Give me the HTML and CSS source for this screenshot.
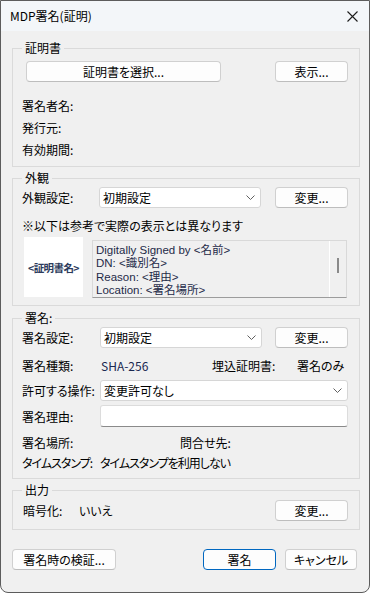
FILE: index.html
```html
<!DOCTYPE html>
<html lang="ja">
<head>
    <meta charset="UTF-8">
    <meta name="viewport" content="width=device-width, initial-scale=1.0">
    <title>MDP署名(証明)</title>
    <link rel="stylesheet" href="styles.css">
</head>
<body>
    <div class="dialog">
        <div class="titlebar">
            <span class="title">MDP署名(証明)</span>
            <svg class="close" width="11" height="11" viewBox="0 0 11 11">
                <path d="M0.5 0.5 L10.5 10.5 M10.5 0.5 L0.5 10.5" stroke="#1c1c1c" stroke-width="1.1" fill="none"/>
            </svg>
        </div>

        <div class="content">
            <!-- 証明書 -->
            <fieldset class="group group-cert">
                <legend>証明書</legend>
                <div class="row">
                    <button class="btn btn-select">証明書を選択...</button>
                    <button class="btn btn-side">表示...</button>
                </div>
                <div class="info-list">
                    <div class="info">署名者名:</div>
                    <div class="info">発行元:</div>
                    <div class="info">有効期間:</div>
                </div>
            </fieldset>

            <!-- 外観 -->
            <fieldset class="group group-look">
                <legend>外観</legend>
                <div class="row">
                    <span class="label">外観設定:</span>
                    <div class="select select-short">
                        <span>初期設定</span>
                        <svg width="9" height="5" viewBox="0 0 9 5"><path d="M0.5 0.5 L4.5 4.5 L8.5 0.5" stroke="#606060" fill="none"/></svg>
                    </div>
                    <button class="btn btn-side">変更...</button>
                </div>
                <div class="note">※以下は参考で実際の表示とは異なります</div>
                <div class="preview">
                    <div class="preview-image">&lt;証明書名&gt;</div>
                    <div class="preview-text">
                        <div class="lines">
                            <div>Digitally Signed by &lt;名前&gt;</div>
                            <div>DN: &lt;識別名&gt;</div>
                            <div>Reason: &lt;理由&gt;</div>
                            <div>Location: &lt;署名場所&gt;</div>
                        </div>
                        <div class="scroll"><div class="thumb"></div></div>
                    </div>
                </div>
            </fieldset>

            <!-- 署名 -->
            <fieldset class="group group-sign">
                <legend>署名:</legend>
                <div class="row">
                    <span class="label label-sign">署名設定:</span>
                    <div class="select select-short">
                        <span>初期設定</span>
                        <svg width="9" height="5" viewBox="0 0 9 5"><path d="M0.5 0.5 L4.5 4.5 L8.5 0.5" stroke="#606060" fill="none"/></svg>
                    </div>
                    <button class="btn btn-side">変更...</button>
                </div>
                <div class="text-row kind-row">
                    <span>署名種類:</span>
                    <span class="value">SHA-256</span>
                    <span>埋込証明書:</span>
                    <span>署名のみ</span>
                </div>
                <div class="row row-op">
                    <span class="label label-op">許可する操作:</span>
                    <div class="select select-wide">
                        <span>変更許可なし</span>
                        <svg width="9" height="5" viewBox="0 0 9 5"><path d="M0.5 0.5 L4.5 4.5 L8.5 0.5" stroke="#606060" fill="none"/></svg>
                    </div>
                </div>
                <div class="row row-reason">
                    <span class="label label-op">署名理由:</span>
                    <div class="textbox"></div>
                </div>
                <div class="text-row place-row">
                    <span>署名場所:</span>
                    <span>問合せ先:</span>
                </div>
                <div class="text-row stamp-row">
                    <span>タイムスタンプ:</span>
                    <span>タイムスタンプを利用しない</span>
                </div>
            </fieldset>

            <!-- 出力 -->
            <fieldset class="group group-out">
                <legend>出力</legend>
                <div class="row">
                    <span class="label label-enc">暗号化:</span>
                    <span class="enc-value">いいえ</span>
                    <button class="btn btn-side">変更...</button>
                </div>
            </fieldset>

            <div class="footer">
                <button class="btn btn-verify">署名時の検証...</button>
                <button class="btn btn-ok">署名</button>
                <button class="btn btn-cancel">キャンセル</button>
            </div>
        </div>
    </div>
</body>
</html>
```

FILE: styles.css
```css
* {
    box-sizing: border-box;
}
body {
    margin: 0;
    background: #ffffff;
    font-family: "Noto Sans CJK JP", "Noto Sans", sans-serif;
    font-size: 12px;
    color: #000;
    font-feature-settings: "palt";
}
.dialog {
    width: 370px;
    height: 593px;
    border: 1px solid #5c5c5c;
    border-radius: 0 0 8px 8px;
    background: #f0f0f0;
    overflow: hidden;
}
.titlebar {
    height: 30px;
    background: #f3f6f9;
    display: flex;
    align-items: center;
    justify-content: space-between;
    padding: 0 11px 0 9px;
}
.title {
    line-height: 14px;
}
.content {
    padding: 10px 9px 0 11px;
}

/* group boxes */
.group {
    margin: 0;
    padding: 2px 11px 8px 9px;
    border: 1px solid #dadada;
    min-width: 0;
}
.group legend {
    padding: 0 3px;
    line-height: 14px;
}
.group-cert {
    padding-top: 6px;
    padding-bottom: 5px;
}
.group-look {
    margin-top: 4px;
}
.group-sign {
    margin-top: 5px;
    padding-bottom: 5px;
}
.group-out {
    margin-top: 4px;
    padding-top: 3px;
}

.row {
    display: flex;
    align-items: center;
    height: 21px;
}
.label {
    width: 77px;
    flex-shrink: 0;
}
.label-sign {
    width: 78px;
}
.label-op {
    width: 78px;
    white-space: nowrap;
}
.label-enc {
    width: 57px;
    padding-left: 1px;
}
.enc-value {
    flex: 1;
}

/* buttons */
.btn {
    font: inherit;
    font-feature-settings: "palt";
    color: #000;
    height: 21px;
    padding: 0;
    background: #fdfdfd;
    border: 1px solid #d0d0d0;
    border-bottom-color: #bdbdbd;
    border-radius: 4px;
    line-height: 18px;
}
.btn-select {
    width: 195px;
    margin-left: 4px;
}
.btn-side {
    width: 73px;
    margin-left: auto;
}

.info-list {
    margin-top: 13px;
}
.info {
    line-height: 22px;
}

/* combo boxes */
.select {
    height: 21px;
    background: #ffffff;
    border: 1px solid #d6d6d6;
    border-radius: 3px;
    display: flex;
    align-items: center;
    justify-content: space-between;
    padding: 0 5px 0 3px;
}
.select-short {
    width: 162px;
}
.select-wide {
    flex: 1;
}
.textbox {
    flex: 1;
    height: 22px;
    background: #ffffff;
    border: 1px solid #dcdcdc;
    border-bottom-color: #8a8a8a;
    border-radius: 3px;
}

/* appearance preview */
.note {
    margin-top: 10px;
    line-height: 16px;
}
.preview {
    margin-top: 3px;
    display: flex;
    height: 60px;
}
.preview-image {
    width: 59px;
    height: 60px;
    margin-left: 2px;
    background: #ffffff;
    display: flex;
    align-items: center;
    justify-content: center;
    font-size: 10.5px;
    font-weight: bold;
    color: #2c3b5c;
    letter-spacing: -0.6px;
    white-space: nowrap;
}
.preview-text {
    width: 255px;
    height: 58px;
    margin: 3px 0 0 9px;
    border: 1px solid #d9d9d9;
    border-bottom-color: #9c9c9c;
    display: flex;
}
.lines {
    flex: 1;
    padding: 3px 0 0 3px;
    font-family: "Liberation Sans", "Noto Sans CJK JP", sans-serif;
    font-size: 11.5px;
    line-height: 13.4px;
    color: #1e2a48;
}
.scroll {
    width: 17px;
    border-left: 1px solid #ffffff;
    display: flex;
    justify-content: center;
    padding-top: 17px;
}
.thumb {
    width: 2px;
    height: 15px;
    background: #8a8a8a;
}

/* signature rows */
.text-row {
    display: grid;
    line-height: 20px;
}
.kind-row {
    margin-top: 8px;
    grid-template-columns: 79px 111px 85px 1fr;
}
.kind-row .value {
    color: #1a2850;
}
.row-op {
    margin-top: 4px;
}
.row-reason {
    margin-top: 4px;
    height: 22px;
}
.place-row {
    margin-top: 6px;
    grid-template-columns: 158px 1fr;
}
.stamp-row {
    grid-template-columns: 78px 1fr;
    letter-spacing: -1px;
    white-space: nowrap;
}

/* bottom buttons */
.footer {
    display: flex;
    margin-top: 19px;
}
.btn-verify {
    width: 104px;
}
.btn-ok {
    width: 73px;
    margin-left: auto;
    border-color: #0067c0;
}
.btn-cancel {
    width: 72px;
    margin: 0 3px 0 9px;
}
```
